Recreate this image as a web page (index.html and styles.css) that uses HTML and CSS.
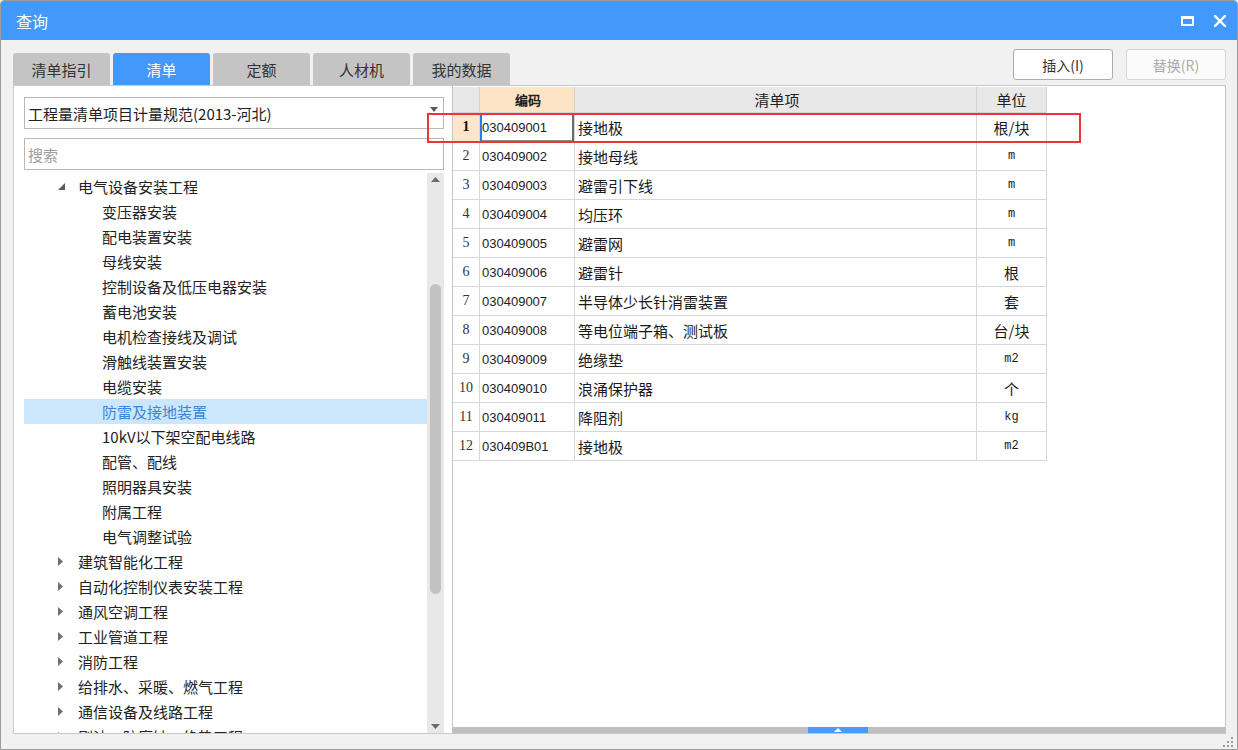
FILE: index.html
```html
<!DOCTYPE html>
<html lang="zh-CN">
<head>
<meta charset="utf-8">
<title>查询</title>
<link rel="stylesheet" href="styles.css">
</head>
<body>
<div class="window">
  <div class="titlebar">
    <div class="title">查询</div>
    <div class="win-btns">
      <svg class="ico-max" width="13" height="10" viewBox="0 0 13 10"><rect x="1" y="1.5" width="11" height="7.5" fill="none" stroke="#fff" stroke-width="2"/><rect x="0" y="0" width="13" height="3" fill="#fff"/></svg>
      <svg class="ico-close" width="12" height="12" viewBox="0 0 12 12"><path d="M1 1L11 11M11 1L1 11" stroke="#fff" stroke-width="2.4" stroke-linecap="square"/></svg>
    </div>
  </div>

  <div class="toolbar">
    <div class="tabs">
      <div class="tab">清单指引</div>
      <div class="tab active">清单</div>
      <div class="tab">定额</div>
      <div class="tab">人材机</div>
      <div class="tab">我的数据</div>
    </div>
    <div class="actions">
      <div class="btn">插入(I)</div>
      <div class="btn disabled">替换(R)</div>
    </div>
  </div>

  <div class="content">
    <div class="left-panel">
      <div class="dropdown">
        <span>工程量清单项目计量规范(2013-河北)</span>
        <svg class="dd-arrow" width="8" height="5" viewBox="0 0 8 5"><polygon points="0,0 8,0 4,5" fill="#5a5a5a"/></svg>
      </div>
      <div class="search">搜索</div>
      <div class="tree">
        <div class="tree-list">
          <div class="node l1"><span class="arrow"><svg width="7" height="7" viewBox="0 0 7 7"><polygon points="7,0 7,7 0,7" fill="#5a5a5a"/></svg></span>电气设备安装工程</div>
          <div class="node l2">变压器安装</div>
          <div class="node l2">配电装置安装</div>
          <div class="node l2">母线安装</div>
          <div class="node l2">控制设备及低压电器安装</div>
          <div class="node l2">蓄电池安装</div>
          <div class="node l2">电机检查接线及调试</div>
          <div class="node l2">滑触线装置安装</div>
          <div class="node l2">电缆安装</div>
          <div class="node l2 selected">防雷及接地装置</div>
          <div class="node l2">10kV以下架空配电线路</div>
          <div class="node l2">配管、配线</div>
          <div class="node l2">照明器具安装</div>
          <div class="node l2">附属工程</div>
          <div class="node l2">电气调整试验</div>
          <div class="node l1"><span class="arrow"><svg width="5" height="9" viewBox="0 0 5 9"><polygon points="0,0 5,4.5 0,9" fill="#707070"/></svg></span>建筑智能化工程</div>
          <div class="node l1"><span class="arrow"><svg width="5" height="9" viewBox="0 0 5 9"><polygon points="0,0 5,4.5 0,9" fill="#707070"/></svg></span>自动化控制仪表安装工程</div>
          <div class="node l1"><span class="arrow"><svg width="5" height="9" viewBox="0 0 5 9"><polygon points="0,0 5,4.5 0,9" fill="#707070"/></svg></span>通风空调工程</div>
          <div class="node l1"><span class="arrow"><svg width="5" height="9" viewBox="0 0 5 9"><polygon points="0,0 5,4.5 0,9" fill="#707070"/></svg></span>工业管道工程</div>
          <div class="node l1"><span class="arrow"><svg width="5" height="9" viewBox="0 0 5 9"><polygon points="0,0 5,4.5 0,9" fill="#707070"/></svg></span>消防工程</div>
          <div class="node l1"><span class="arrow"><svg width="5" height="9" viewBox="0 0 5 9"><polygon points="0,0 5,4.5 0,9" fill="#707070"/></svg></span>给排水、采暖、燃气工程</div>
          <div class="node l1"><span class="arrow"><svg width="5" height="9" viewBox="0 0 5 9"><polygon points="0,0 5,4.5 0,9" fill="#707070"/></svg></span>通信设备及线路工程</div>
          <div class="node l1"><span class="arrow"><svg width="5" height="9" viewBox="0 0 5 9"><polygon points="0,0 5,4.5 0,9" fill="#707070"/></svg></span>刷油、防腐蚀、绝热工程</div>
        </div>
        <div class="vscroll">
          <svg class="sb-up" width="9" height="5" viewBox="0 0 9 5"><polygon points="0,5 9,5 4.5,0" fill="#6a6a6a"/></svg>
          <div class="thumb"></div>
          <div class="sb-space"></div>
          <svg class="sb-down" width="9" height="5" viewBox="0 0 9 5"><polygon points="0,0 9,0 4.5,5" fill="#6a6a6a"/></svg>
        </div>
      </div>
    </div>

    <div class="grid-panel">
      <div class="table">
        <div class="row head">
          <div class="c num"></div>
          <div class="c code hl">编码</div>
          <div class="c name">清单项</div>
          <div class="c unit">单位</div>
        </div>
        <div class="row">
          <div class="c num cur">1</div>
          <div class="c code sel">030409001</div>
          <div class="c name">接地极</div>
          <div class="c unit">根/块</div>
        </div>
        <div class="row"><div class="c num">2</div><div class="c code">030409002</div><div class="c name">接地母线</div><div class="c unit lat">m</div></div>
        <div class="row"><div class="c num">3</div><div class="c code">030409003</div><div class="c name">避雷引下线</div><div class="c unit lat">m</div></div>
        <div class="row"><div class="c num">4</div><div class="c code">030409004</div><div class="c name">均压环</div><div class="c unit lat">m</div></div>
        <div class="row"><div class="c num">5</div><div class="c code">030409005</div><div class="c name">避雷网</div><div class="c unit lat">m</div></div>
        <div class="row"><div class="c num">6</div><div class="c code">030409006</div><div class="c name">避雷针</div><div class="c unit">根</div></div>
        <div class="row"><div class="c num">7</div><div class="c code">030409007</div><div class="c name">半导体少长针消雷装置</div><div class="c unit">套</div></div>
        <div class="row"><div class="c num">8</div><div class="c code">030409008</div><div class="c name">等电位端子箱、测试板</div><div class="c unit">台/块</div></div>
        <div class="row"><div class="c num">9</div><div class="c code">030409009</div><div class="c name">绝缘垫</div><div class="c unit lat">m2</div></div>
        <div class="row"><div class="c num">10</div><div class="c code">030409010</div><div class="c name">浪涌保护器</div><div class="c unit">个</div></div>
        <div class="row"><div class="c num">11</div><div class="c code">030409011</div><div class="c name">降阻剂</div><div class="c unit lat">kg</div></div>
        <div class="row"><div class="c num">12</div><div class="c code">030409B01</div><div class="c name">接地极</div><div class="c unit lat">m2</div></div>
      </div>
      <div class="hscroll">
        <div class="hthumb"><svg width="8" height="4" viewBox="0 0 8 4"><polygon points="0,4 8,4 4,0" fill="#fff"/></svg></div>
      </div>
    </div>
  </div>

  <div class="footer">
    <svg class="grip" width="11" height="10" viewBox="0 0 11 10">
      <rect x="8" y="0" width="2" height="2" fill="#9a9a9a"/>
      <rect x="4" y="4" width="2" height="2" fill="#9a9a9a"/>
      <rect x="8" y="4" width="2" height="2" fill="#9a9a9a"/>
      <rect x="0" y="8" width="2" height="2" fill="#9a9a9a"/>
      <rect x="4" y="8" width="2" height="2" fill="#9a9a9a"/>
      <rect x="8" y="8" width="2" height="2" fill="#9a9a9a"/>
    </svg>
  </div>

  <div class="highlight-box"></div>
</div>
</body>
</html>
```

FILE: styles.css
```css
* { box-sizing: border-box; }
html, body { margin: 0; padding: 0; }
body {
  width: 1238px;
  height: 750px;
  overflow: hidden;
  background: #ffffff;
  font-family: "Noto Sans CJK SC", "Noto Sans", sans-serif;
}

.window {
  position: relative;
  width: 1238px;
  height: 750px;
  border: 1px solid #9c9c9c;
  border-radius: 4px 4px 0 0;
  background: #f1f1f1;
  display: flex;
  flex-direction: column;
  overflow: hidden;
}

/* title bar */
.titlebar {
  height: 39px;
  flex: none;
  background: #4398fc;
  display: flex;
  align-items: center;
  padding: 0 11px 0 15px;
  color: #fff;
}
.title { flex: 1; font-size: 16px; line-height: 1; }
.win-btns { display: flex; align-items: center; gap: 20px; }
.ico-max { display: block; margin-top: 1px; }
.ico-close { display: block; }

/* tabs + buttons */
.toolbar {
  height: 45px;
  flex: none;
  display: flex;
  align-items: flex-end;
  padding: 0 11px 0 12px;
}
.tabs { display: flex; gap: 3px; }
.tab {
  width: 97px;
  height: 32px;
  border-radius: 3px 3px 0 0;
  background: #c4c4c4;
  color: #333;
  font-size: 15px;
  display: flex;
  align-items: center;
  justify-content: center;
}
.tab.active { background: #4398fc; color: #fff; }

.actions {
  margin-left: auto;
  align-self: flex-start;
  margin-top: 9px;
  display: flex;
  gap: 13px;
}
.btn {
  width: 100px;
  height: 31px;
  border: 1px solid #adadad;
  border-radius: 3px;
  background: #fff;
  color: #333;
  font-size: 14px;
  display: flex;
  align-items: center;
  justify-content: center;
}
.btn.disabled { border-color: #d6d6d6; color: #ababab; background: #fbfbfb; }

/* content */
.content {
  height: 649px;
  flex: none;
  display: flex;
  padding: 0 11px 0 12px;
}

.left-panel {
  width: 439px;
  flex: none;
  background: #fff;
  border: 1px solid #cbcbcb;
  border-right: none;
  padding: 11px 8px 0 10px;
  display: flex;
  flex-direction: column;
}
.dropdown {
  height: 32px;
  flex: none;
  border: 1px solid #b8b8b8;
  padding-left: 3px;
  font-size: 15px;
  color: #222;
  display: flex;
  align-items: center;
}
.dd-arrow { margin-left: auto; margin-right: 5px; margin-top: -7px; display: block; }
.search {
  height: 32px;
  flex: none;
  margin-top: 9px;
  border: 1px solid #b8b8b8;
  padding-left: 3px;
  font-size: 15px;
  color: #9d9d9d;
  display: flex;
  align-items: center;
}

.tree {
  flex: 1;
  min-height: 0;
  margin-top: 3px;
  display: flex;
}
.tree-list {
  flex: 1;
  min-width: 0;
  overflow: hidden;
  padding-top: 1px;
}
.node {
  height: 25px;
  display: flex;
  align-items: center;
  font-size: 15px;
  color: #222;
  white-space: nowrap;
}
.node.l1 { padding-left: 34px; }
.node.l2 { padding-left: 78px; }
.node .arrow { width: 20px; flex: none; display: flex; align-items: center; }
.node .arrow svg { display: block; }
.node.selected { background: #cce6fb; color: #3b86d6; }

.vscroll {
  width: 17px;
  flex: none;
  background: #e8e8e8;
  display: flex;
  flex-direction: column;
  align-items: center;
  padding: 4px 0 4px;
}
.sb-up, .sb-down { display: block; flex: none; }
.thumb {
  width: 11px;
  height: 310px;
  flex: none;
  margin-top: 102px;
  background: #c2c2c2;
  border-radius: 6px;
}
.sb-space { flex: 1; }

/* grid */
.grid-panel {
  width: 774px;
  flex: none;
  background: #fff;
  border: 1px solid #c6c6c6;
  padding-top: 1px;
  display: flex;
  flex-direction: column;
}
.table { flex: 1; }
.row {
  display: grid;
  grid-template-columns: 27px 95px 402px 70px;
  height: 29px;
}
.row.head { height: 26px; }
.c {
  border-right: 1px solid #d7d7d7;
  border-bottom: 1px solid #d7d7d7;
  display: flex;
  align-items: center;
  font-size: 15px;
  color: #1a1a1a;
  white-space: nowrap;
  overflow: hidden;
}
.row.head .c { background: #e8e8e8; border-color: #d2d2d2; justify-content: center; color: #222; }
.row.head .c.hl { background: #fde4c6; font-weight: bold; }
.c.num {
  justify-content: center;
  font-family: "Liberation Serif", "DejaVu Serif", serif;
  font-size: 14px;
  color: #333;
}
.c.num.cur { background: #fde6cb; font-weight: bold; color: #111; }
.c.code {
  padding-left: 2px;
  font-family: "Liberation Sans", Arial, sans-serif;
  font-size: 13px;
  color: #222;
}
.c.code.sel {
  box-shadow: inset 2px 0 0 #2a7be6, inset -2px 0 0 #6b6b6b, inset 0 -1px 0 #8c8c8c;
}
.c.name { padding-left: 3px; }
.c.unit { justify-content: center; }
.c.unit.lat {
  font-family: "Liberation Mono", "DejaVu Sans Mono", monospace;
  font-size: 12px;
}

.hscroll {
  height: 6px;
  flex: none;
  background: #bfbfbf;
  padding-left: 355px;
  display: flex;
}
.hthumb {
  width: 60px;
  height: 6px;
  background: #4a9afb;
  display: flex;
  align-items: center;
  justify-content: center;
}
.hthumb svg { display: block; }

.footer {
  flex: 1;
  display: flex;
  justify-content: flex-end;
  align-items: flex-end;
  padding: 0 3px 2px 0;
}
.grip { display: block; }

/* annotation overlay */
.highlight-box {
  position: absolute;
  left: 426px;
  top: 112px;
  width: 654px;
  height: 30px;
  border: 2px solid #ee3535;
  pointer-events: none;
}
```
